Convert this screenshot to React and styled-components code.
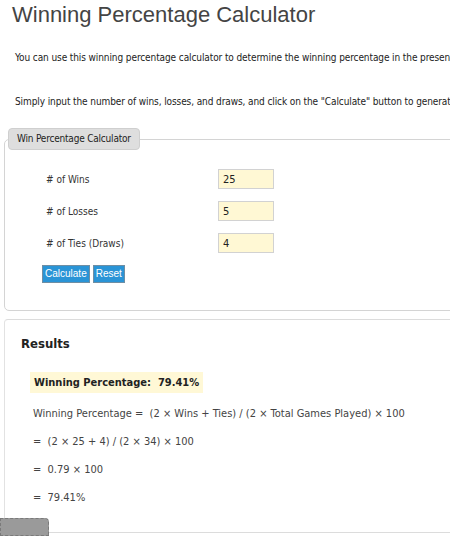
import styled, { createGlobalStyle } from "styled-components";

const GlobalStyle = createGlobalStyle`
  html, body {
    margin: 0;
    padding: 0;
    background: #fff;
    overflow: hidden;
  }
  body {
    font-family: "DejaVu Sans Condensed", "DejaVu Sans", sans-serif;
    font-size: 10px;
    color: #222;
  }
`;

const Page = styled.div`
  width: 640px;
`;

const Title = styled.h1`
  margin: 2px 0 0 12px;
  font-family: "Liberation Sans", Arial, sans-serif;
  font-size: 22px;
  line-height: 26px;
  font-weight: normal;
  color: #444;
`;

const Intro = styled.p`
  margin: ${({ $top }) => $top}px 0 0 15px;
  line-height: 16px;
  letter-spacing: -0.1px;
  white-space: nowrap;
`;

const Fieldset = styled.fieldset`
  margin: 18px 0 0 4px;
  padding: 0;
  border: 1px solid #d4d4d4;
  border-radius: 5px;
  min-width: 0;
`;

const Legend = styled.legend`
  margin-left: 3px;
  padding: 0 8px;
  height: 22px;
  box-sizing: border-box;
  line-height: 20px;
  background: #dedede;
  border: 1px solid #cfcfcf;
  border-radius: 4px;
  letter-spacing: -0.2px;
  color: #222;
`;

const Form = styled.div`
  padding: 19px 0 27px 37px;
`;

const Row = styled.div`
  display: grid;
  grid-template-columns: 176px 56px;
  align-items: center;
  height: 20px;
  margin-bottom: 12px;
  color: #333;
`;

const Label = styled.span`
  padding-left: 4px;
`;

const Input = styled.input`
  box-sizing: border-box;
  width: 56px;
  height: 20px;
  padding: 0 4px;
  border: 1px solid #d2d2d2;
  background: #fff8d4;
  font-family: inherit;
  font-size: 11px;
  color: #222;
  outline: none;
`;

const Buttons = styled.div`
  display: flex;
  gap: 3px;
`;

const Button = styled.button`
  height: 18px;
  padding: 0 2px;
  border: 1px solid #6f8ea3;
  background: #2a94d6;
  color: #fff;
  font-family: "Liberation Sans", Arial, sans-serif;
  font-size: 10px;
  line-height: 16px;
  cursor: pointer;
`;

const Results = styled.section`
  margin: 8px 0 0 4px;
  padding: 14px 16px 26px;
  border: 1px solid #dcdcdc;
  border-left-color: #e2e2e2;
  border-radius: 4px 0 0 0;
`;

const ResultsTitle = styled.h2`
  margin: 0;
  font-size: 13px;
  line-height: 20px;
  font-weight: bold;
  color: #222;
`;

const Highlight = styled.div`
  display: inline-block;
  margin: 18px 0 0 9px;
  padding: 0 4px;
  height: 21px;
  line-height: 21px;
  background: #fff8d6;
  font-weight: bold;
  font-size: 11px;
  color: #222;
  white-space: pre;
`;

const Line = styled.div`
  margin: ${({ $first }) => ($first ? 13 : 12)}px 0 0 12px;
  font-size: 11px;
  line-height: 16px;
  color: #444;
  white-space: pre;
`;

const ScrollTab = styled.div`
  position: fixed;
  left: 0;
  bottom: 0;
  width: 49px;
  height: 18px;
  box-sizing: border-box;
  background: #9a9a9a;
  border: 1px dashed #7a7a7a;
  border-radius: 0 4px 0 0;
`;

export default function App() {
  return (
    <Page>
      <GlobalStyle />
      <Title>Winning Percentage Calculator</Title>
      <Intro $top={22}>
        You can use this winning percentage calculator to determine the winning percentage in the presence of ties.
      </Intro>
      <Intro $top={28}>
        Simply input the number of wins, losses, and draws, and click on the "Calculate" button to generate the results.
      </Intro>

      <Fieldset>
        <Legend>Win Percentage Calculator</Legend>
        <Form>
          <Row>
            <Label># of Wins</Label>
            <Input defaultValue="25" />
          </Row>
          <Row>
            <Label># of Losses</Label>
            <Input defaultValue="5" />
          </Row>
          <Row>
            <Label># of Ties (Draws)</Label>
            <Input defaultValue="4" />
          </Row>
          <Buttons>
            <Button>Calculate</Button>
            <Button>Reset</Button>
          </Buttons>
        </Form>
      </Fieldset>

      <Results>
        <ResultsTitle>Results</ResultsTitle>
        <Highlight>Winning Percentage:  79.41%</Highlight>
        <Line $first>Winning Percentage =  (2 × Wins + Ties) / (2 × Total Games Played) × 100</Line>
        <Line>=  (2 × 25 + 4) / (2 × 34) × 100</Line>
        <Line>=  0.79 × 100</Line>
        <Line>=  79.41%</Line>
      </Results>

      <ScrollTab />
    </Page>
  );
}
